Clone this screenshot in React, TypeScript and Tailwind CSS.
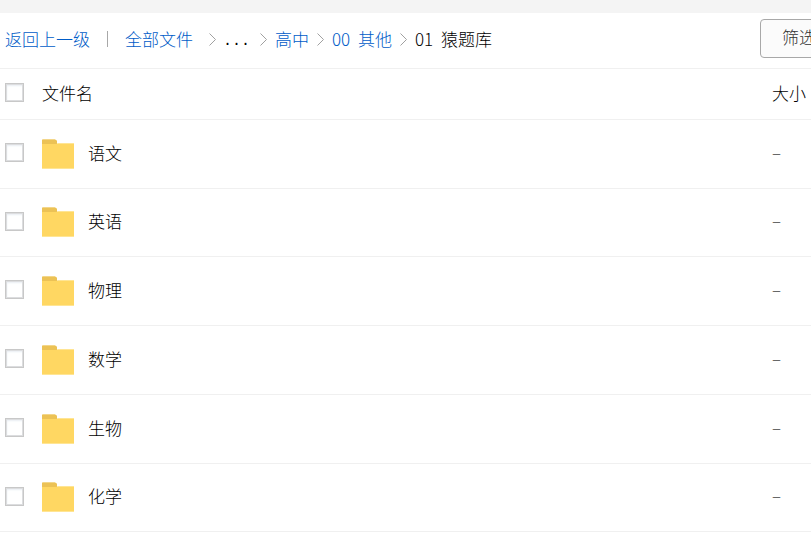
import { Fragment } from "react";

const folders = ["语文", "英语", "物理", "数学", "生物", "化学"];

const crumbs = [
	{ prefix: "", name: "高中" },
	{ prefix: "00", name: "其他" },
];

function Chevron() {
	return (
		<svg
			width="7"
			height="13"
			viewBox="0 0 7 13"
			fill="none"
			stroke="#a0a0a0"
			className="shrink-0"
			aria-hidden="true"
		>
			<path d="M0.5 0.5L6.5 6.5L0.5 12.5" />
		</svg>
	);
}

function FolderIcon() {
	return (
		<svg
			width="32"
			height="30"
			viewBox="0 0 32 30"
			className="shrink-0"
			aria-hidden="true"
		>
			<path d="M0 0.5H13Q14.5 0.5 15 2V6H0Z" fill="#ecc255" />
			<path d="M0 5H14.5L15.5 4.5H32V30H0Z" fill="#ffd762" />
			<path d="M0 29.5H32" stroke="#ffe594" />
			<path d="M15.5 4.5H32" stroke="#ffe594" />
			<path d="M1 0.5H13" stroke="#f3d68a" />
		</svg>
	);
}

function Checkbox({ label }: { label: string }) {
	return (
		<input
			type="checkbox"
			aria-label={label}
			className="block size-[19px] shrink-0 appearance-none border border-[#c8c8c8] bg-white shadow-[inset_0_0_0_1px_#dcdddf,inset_1px_2px_2px_#e9eef3] checked:bg-[#1a6fc9]"
		/>
	);
}

export default function App() {
	return (
		<div className="overflow-hidden bg-white font-['Noto_Sans_CJK_SC',sans-serif] text-[17px] leading-6 font-light text-black">
			<div className="h-[13px] bg-[#f4f4f4]" />
			<header className="flex h-14 items-start justify-between border-b border-[#f0f0f0] pt-[6px] pl-[5px]">
				<nav
					aria-label="路径"
					className="flex items-center pt-2 whitespace-nowrap text-[#005cc8]"
				>
					<a href="#back">返回上一级</a>
					<span className="mx-[17px] h-4 w-px bg-[#a8a8a8]" />
					<a href="#all">全部文件</a>
					<span className="w-4" />
					<Chevron />
					<span className="w-[34px] pt-[6px] pl-[7px] font-['Liberation_Mono',monospace] text-[15px] leading-[18px] text-black">
						...
					</span>
					<span className="w-[10px]" />
					<Chevron />
					{crumbs.map((c) => (
						<Fragment key={c.name}>
							<a href="#folder" className="mr-2 ml-2">
								{c.prefix && <span className="mr-1">{c.prefix} </span>}
								{c.name}
							</a>
							<Chevron />
						</Fragment>
					))}
					<span className="ml-2 text-black">
						<span className="mr-1">01 </span>猿题库
					</span>
				</nav>
				<div className="w-[51px] shrink-0">
					<button
						type="button"
						className="h-[39px] w-[78px] rounded border border-[#a8a8a8] bg-[#fbfbfb] pb-1 text-[#333]"
					>
						筛选
					</button>
				</div>
			</header>
			<table className="w-full table-fixed border-collapse text-left">
				<thead>
					<tr className="h-[50px] border-b border-[#f0f0f0]">
						<th className="p-0 pb-[2px] pl-[5px] font-light">
							<div className="flex items-center">
								<Checkbox label="全选" />
								<span className="ml-[18px]">文件名</span>
							</div>
						</th>
						<th className="w-[39px] p-0 pb-[2px] font-light whitespace-nowrap">
							大小
						</th>
					</tr>
				</thead>
				<tbody>
					{folders.map((name) => (
						<tr
							key={name}
							className="h-[69px] border-b border-[#f0f0f0] nth-[4n+2]:h-[68px]"
						>
							<td className="p-0 pb-[2px] pl-[5px]">
								<div className="flex items-center">
									<Checkbox label={name} />
									<span className="mt-[2px] ml-[18px]">
										<FolderIcon />
									</span>
									<a href="#folder" className="ml-[14px]">
										{name}
									</a>
								</div>
							</td>
							<td className="p-0 pb-1 text-[#444]">–</td>
						</tr>
					))}
				</tbody>
			</table>
		</div>
	);
}
